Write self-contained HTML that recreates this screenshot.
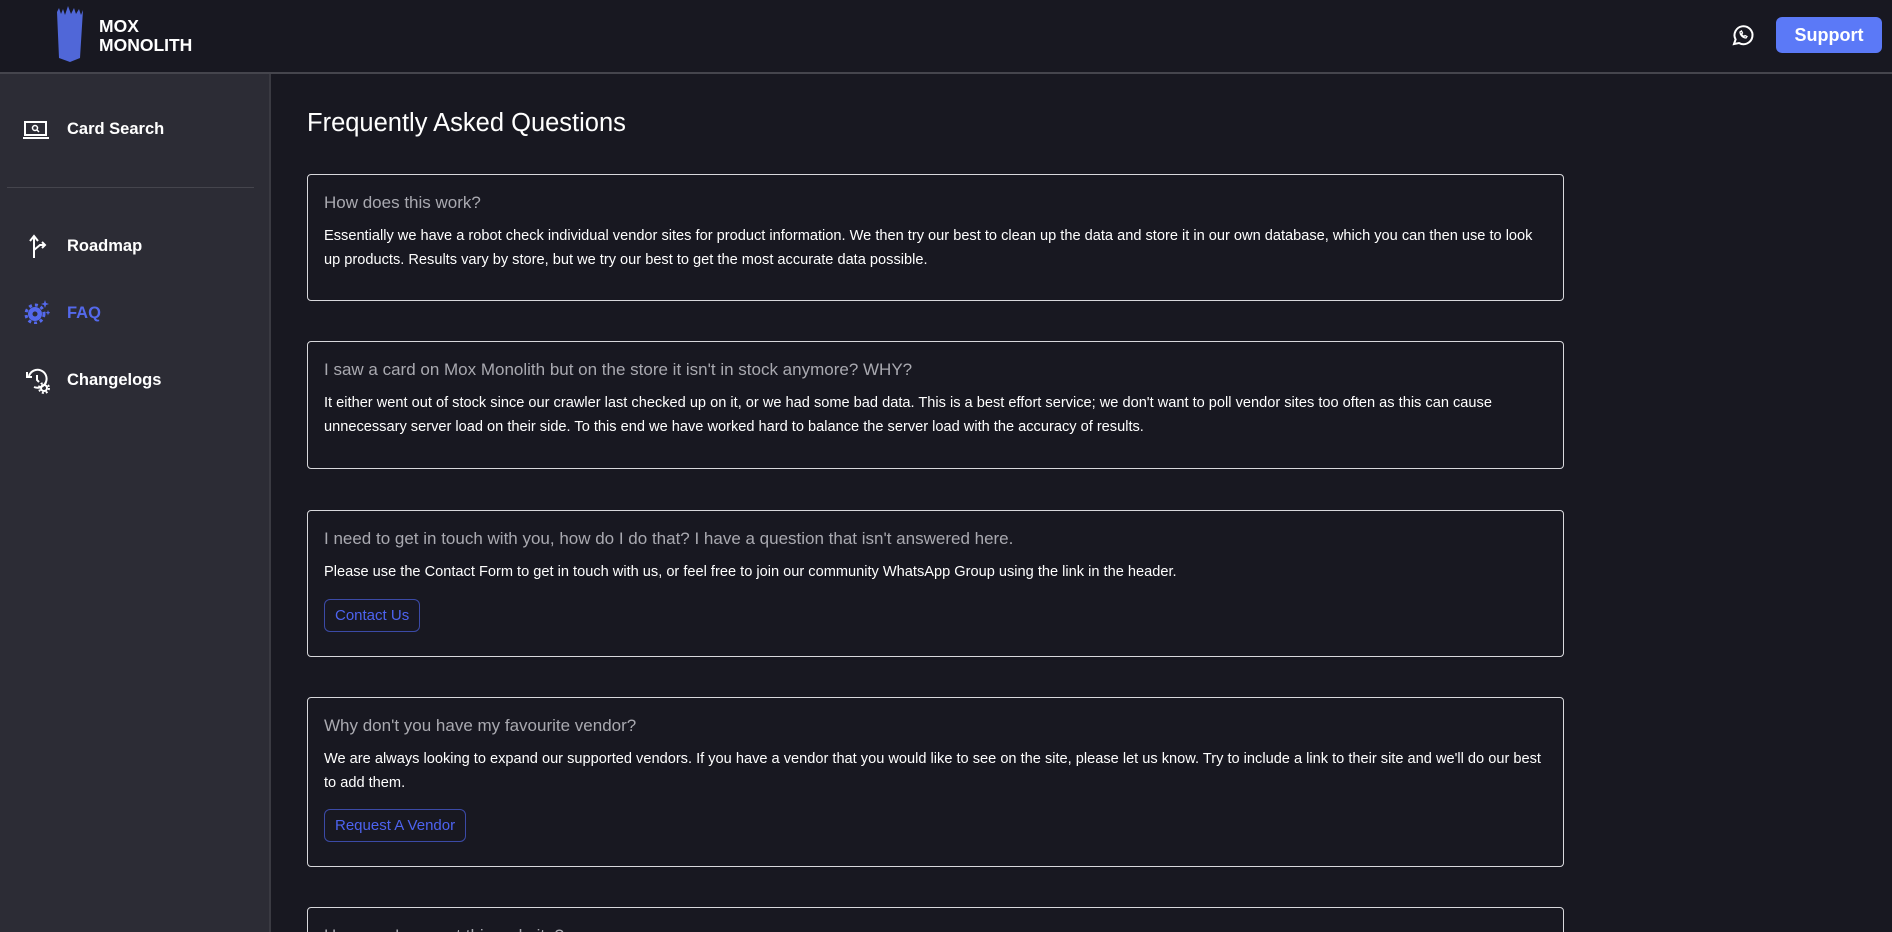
<!DOCTYPE html>
<html><head><meta charset="utf-8"><style>
*{box-sizing:border-box;margin:0;padding:0}
html,body{width:1892px;height:932px;overflow:hidden}
body{background:#181821;font-family:"Liberation Sans",sans-serif;color:#fff;position:relative}
.hdr{position:absolute;left:0;top:0;width:1892px;height:74px;background:#181821;border-bottom:2px solid #45454d}
.side{position:absolute;left:0;top:74px;width:271px;height:858px;background:#2c2c35;border-right:2px solid #3a3a42}
.nav{position:absolute;left:67px;font-weight:bold;font-size:16.5px}
.ic{position:absolute;left:22px}
.card{position:absolute;left:307px;width:1257px;border:1px solid #d8d8dc;border-radius:4px}
.q{position:absolute;left:16px;font-size:17px;color:#a9a9b0}
.a{position:absolute;left:16px;white-space:nowrap;font-size:14.6px;line-height:24px;color:#fff}
.btn{position:absolute;left:16px;height:33px;border:1px solid #3b4aa6;border-radius:6px;color:#4d63f0;font-size:15px;line-height:31px;padding:0 10px}
</style></head><body>
<div class="hdr">
<svg style="position:absolute;left:55px;top:6px" width="30" height="56" viewBox="0 0 30 56"><path d="M2 6 L4 2 L6 8 L8 3 L10 9 L13 0 L16 8 L19 2 L21 8 L24 3 L26 9 L28 4 L25 52 L15 56 L4 52 Z" fill="#5067d8"/></svg>
<div style="position:absolute;left:99px;top:17px;font-weight:bold;font-size:17.5px;line-height:19px">MOX<br>MONOLITH</div>
<svg style="position:absolute;left:1731px;top:23px" width="24" height="24" viewBox="0 0 24 24" fill="none" stroke="#fff" stroke-width="2"><path d="M3 21l1.6-4.5A9 9 0 1 1 8 20z"/><path d="M9 9c0 3 3 6 6 6l1-1.5-2-1-1 1c-1-.5-2-1.5-2.5-2.5l1-1-1-2z" stroke-width="1.3"/></svg>
<div style="position:absolute;left:1776px;top:17px;width:106px;height:36px;background:#5b79f7;border-radius:6px;font-weight:bold;font-size:18px;line-height:36px;text-align:center">Support</div>
</div>
<div class="side">
<svg class="ic" style="top:46px" width="28" height="20" viewBox="0 0 28 20" fill="none" stroke="#fff" stroke-width="2"><rect x="3" y="2" width="21" height="13"/><path d="M1 18h26"/><circle cx="13" cy="8" r="2.5" stroke-width="1.5"/><path d="M15 10l2 2" stroke-width="1.5"/></svg>
<div class="nav" style="top:46px">Card Search</div>
<div style="position:absolute;left:7px;top:113px;width:247px;height:1px;background:#45454d"></div>
<svg class="ic" style="top:160px;left:26px" width="22" height="24" viewBox="0 0 22 24" fill="none" stroke="#fff" stroke-width="2"><path d="M8 24V3M4 7l4-5 4 5M8 16l6-5h5M16 8l3 3-3 3"/></svg>
<div class="nav" style="top:163px">Roadmap</div>
<svg class="ic" style="top:226px;left:24px" width="26" height="24" viewBox="0 0 26 24"><circle cx="11" cy="14" r="7" fill="#5469ec"/><circle cx="11" cy="14" r="9" fill="none" stroke="#5469ec" stroke-width="3" stroke-dasharray="3 3"/><circle cx="11" cy="14" r="2.5" fill="#2c2c35"/><path d="M21 0l1 3 3 1-3 1-1 3-1-3-3-1 3-1z M24 10l.7 2 2 .7-2 .7-.7 2-.7-2-2-.7 2-.7z" fill="#5469ec"/></svg>
<div class="nav" style="top:230px;color:#5469ec">FAQ</div>
<svg class="ic" style="top:294px;left:25px" width="26" height="26" viewBox="0 0 26 26" fill="none" stroke="#fff" stroke-width="2"><path d="M4 8A9 9 0 1 1 9 19"/><path d="M2 4v5h5"/><path d="M12 7v5l2 2"/><circle cx="19" cy="20" r="3"/><circle cx="19" cy="20" r="5" stroke-dasharray="2 2"/></svg>
<div class="nav" style="top:297px">Changelogs</div>
</div>
<div style="position:absolute;left:307px;top:109px;font-size:25.5px">Frequently Asked Questions</div>

<div class="card" style="top:174px;height:127px">
<div class="q" style="top:18px">How does this work?</div>
<div class="a" style="top:49px">Essentially we have a robot check individual vendor sites for product information. We then try our best to clean up the data and store it in our own database, which you can then use to look<br>up products. Results vary by store, but we try our best to get the most accurate data possible.</div>
</div>
<div class="card" style="top:341px;height:128px">
<div class="q" style="top:18px">I saw a card on Mox Monolith but on the store it isn't in stock anymore? WHY?</div>
<div class="a" style="top:49px">It either went out of stock since our crawler last checked up on it, or we had some bad data. This is a best effort service; we don't want to poll vendor sites too often as this can cause<br>unnecessary server load on their side. To this end we have worked hard to balance the server load with the accuracy of results.</div>
</div>
<div class="card" style="top:510px;height:147px">
<div class="q" style="top:18px">I need to get in touch with you, how do I do that? I have a question that isn't answered here.</div>
<div class="a" style="top:49px">Please use the Contact Form to get in touch with us, or feel free to join our community WhatsApp Group using the link in the header.</div>
<div class="btn" style="top:88px">Contact Us</div>
</div>
<div class="card" style="top:697px;height:170px">
<div class="q" style="top:18px">Why don't you have my favourite vendor?</div>
<div class="a" style="top:49px">We are always looking to expand our supported vendors. If you have a vendor that you would like to see on the site, please let us know. Try to include a link to their site and we'll do our best<br>to add them.</div>
<div class="btn" style="top:111px">Request A Vendor</div>
</div>
<div class="card" style="top:907px;height:60px">
<div class="q" style="top:18px">How can I support this website?</div>
</div>
</body></html>
